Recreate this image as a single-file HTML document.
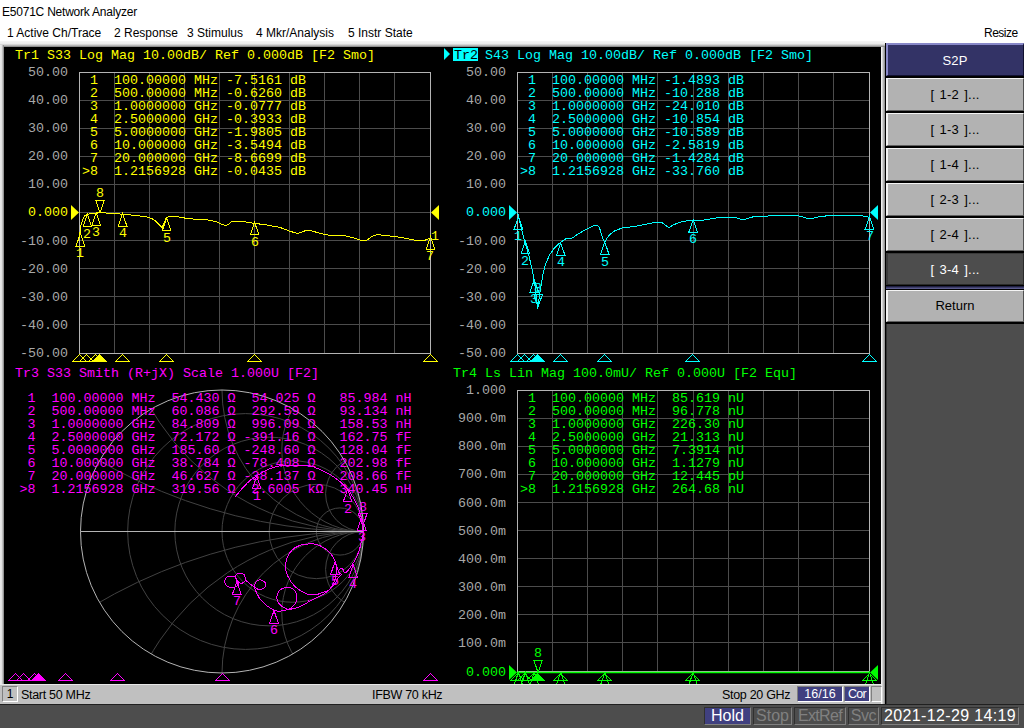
<!DOCTYPE html><html><head><meta charset="utf-8"><style>
*{margin:0;padding:0;box-sizing:border-box}
html,body{width:1024px;height:728px;overflow:hidden;background:#fff}
body{position:relative;font-family:"Liberation Sans",sans-serif;color:#000}
.abs{position:absolute}
.m{font-family:"Liberation Mono",monospace;font-size:13.333px;line-height:13px;height:13px;white-space:pre;position:absolute}
.s{font-family:"Liberation Sans",sans-serif;position:absolute;white-space:pre}
svg{position:absolute;left:0;top:0;overflow:visible;z-index:1}
.m{z-index:2}
.top{z-index:3}
.sb{z-index:4}
.btn{position:absolute;left:886px;width:138px;height:33px;background:#b2b2b2;border-top:1px solid #f4f4f4;border-left:2px solid #f4f4f4;border-right:1px solid #505050;border-bottom:1px solid #606060;font-size:13px;text-align:center;line-height:31px;color:#000;word-spacing:1.5px;letter-spacing:0.2px;padding-right:1px}
.sb{position:absolute;font-family:"Liberation Sans",sans-serif;white-space:pre;text-align:center}
</style></head><body>
<div class="s" style="left:2px;top:4px;font-size:12px;line-height:16px;letter-spacing:-0.22px">E5071C Network Analyzer</div>
<div class="s" style="left:7px;top:25px;font-size:12px;line-height:16px">1 Active Ch/Trace</div>
<div class="s" style="left:114px;top:25px;font-size:12px;line-height:16px">2 Response</div>
<div class="s" style="left:187px;top:25px;font-size:12px;line-height:16px">3 Stimulus</div>
<div class="s" style="left:256px;top:25px;font-size:12px;line-height:16px">4 Mkr/Analysis</div>
<div class="s" style="left:348px;top:25px;font-size:12px;line-height:16px">5 Instr State</div>
<div class="s" style="left:984px;top:25px;font-size:12px;line-height:16px;letter-spacing:-0.5px">Resize</div>
<div class="abs" style="left:0;top:43px;width:886px;height:661px;background:#c0c0c0"></div>
<div class="abs" style="left:0;top:41px;width:885px;height:6px;background:linear-gradient(#f6f6f6 0%,#ececec 45%,#c4c4c4 70%,#7c7c7c 100%)"></div>
<div class="abs" style="left:0;top:45px;width:4px;height:640px;background:linear-gradient(90deg,#ececec 0%,#e0e0e0 45%,#7c7c7c 100%)"></div>
<div class="abs" style="left:4px;top:47px;width:877px;height:637px;background:#000"></div>
<div class="abs" style="left:881px;top:47px;width:4px;height:657px;background:linear-gradient(90deg,#fff,#d0d0d0 40%,#888)"></div>
<div class="abs" style="left:885px;top:43px;width:1px;height:661px;background:#000"></div>
<div class="abs top" style="left:0;top:684px;width:881px;height:20px;background:#c0c0c0;border-top:1px solid #e8e8e8"></div>
<div class="abs" style="left:0;top:704px;width:1024px;height:24px;background:#4d4d4d;border-top:1px solid #202020"></div>
<div class="abs" style="left:886px;top:43px;width:138px;height:661px;background:#4d4d4d"></div>
<div class="abs" style="left:886px;top:43px;width:138px;height:281px;background:#000"></div>
<div class="btn" style="top:43px;line-height:33px;background:#333366;color:#fff;border-color:#8888c8 #101030 #101030 #8888c8;border-top-width:2px;line-height:32px">S2P</div>
<div class="btn" style="top:78px">[ 1-2 ]...</div>
<div class="btn" style="top:113px">[ 1-3 ]...</div>
<div class="btn" style="top:148px">[ 1-4 ]...</div>
<div class="btn" style="top:183px">[ 2-3 ]...</div>
<div class="btn" style="top:218px">[ 2-4 ]...</div>
<div class="btn" style="top:253px;height:32px;background:#4d4d4d;color:#fff;border-color:#3a3a3a #2a2a2a #2a2a2a #3a3a3a">[ 3-4 ]...</div>
<div class="abs" style="left:886px;top:286px;width:138px;height:3px;background:linear-gradient(#101030,#6a6aa0)"></div>
<div class="btn" style="top:290px;height:32px;letter-spacing:0;line-height:30px">Return</div>
<div class="abs" style="left:886px;top:324px;width:138px;height:380px;background:#4d4d4d;border-left:1px solid #303030"></div>
<div class="sb" style="left:2px;top:686px;width:16px;height:16px;border:1px solid;border-color:#808080 #fff #fff #808080;font-size:12px;line-height:14px">1</div>
<div class="sb" style="left:21px;top:687px;font-size:12.5px;line-height:16px;letter-spacing:-0.3px">Start 50 MHz</div>
<div class="sb" style="left:372px;top:687px;font-size:12.5px;line-height:16px;letter-spacing:-0.3px">IFBW 70 kHz</div>
<div class="sb" style="left:722px;top:687px;font-size:12.5px;line-height:16px;letter-spacing:-0.3px">Stop 20 GHz</div>
<div class="sb" style="left:797px;top:686px;width:46px;height:16px;background:#404080;color:#fff;border:1px solid;border-color:#808080 #fff #fff #808080;font-size:12.5px;line-height:14px">16/16</div>
<div class="sb" style="left:844px;top:686px;width:26px;height:16px;background:#404080;color:#fff;border:1px solid;border-color:#808080 #fff #fff #808080;font-size:12.5px;line-height:14px;letter-spacing:-0.7px">Cor</div>
<div class="sb" style="left:871px;top:686px;width:11px;height:16px;border:1px solid;border-color:#808080 #fff #fff #808080"></div>
<div class="sb" style="left:704px;top:707px;width:47px;height:18px;background:#404080;letter-spacing:0px;color:#fff;border:1px solid;border-color:#303030 #808080 #808080 #303030;font-size:16px;line-height:16px">Hold</div>
<div class="sb" style="left:753px;top:707px;width:39px;height:18px;letter-spacing:0px;color:#808080;border:1px solid;border-color:#303030 #808080 #808080 #303030;font-size:16px;line-height:16px">Stop</div>
<div class="sb" style="left:794px;top:707px;width:52px;height:18px;letter-spacing:-0.7px;color:#808080;border:1px solid;border-color:#303030 #808080 #808080 #303030;font-size:16px;line-height:16px">ExtRef</div>
<div class="sb" style="left:848px;top:707px;width:31px;height:18px;letter-spacing:-0.4px;color:#808080;border:1px solid;border-color:#303030 #808080 #808080 #303030;font-size:16px;line-height:16px">Svc</div>
<div class="sb" style="left:881px;top:707px;width:138px;height:18px;letter-spacing:0.35px;color:#fff;border:1px solid;border-color:#303030 #808080 #808080 #303030;font-size:16px;line-height:16px">2021-12-29 14:19</div>
<div class="m" style="left:28px;top:66px;color:#a8a8a8;">50.00</div>
<div class="m" style="left:28px;top:94px;color:#a8a8a8;">40.00</div>
<div class="m" style="left:28px;top:122px;color:#a8a8a8;">30.00</div>
<div class="m" style="left:28px;top:150px;color:#a8a8a8;">20.00</div>
<div class="m" style="left:28px;top:178px;color:#a8a8a8;">10.00</div>
<div class="m" style="left:28px;top:206px;color:#ffff00;">0.000</div>
<div class="m" style="left:20px;top:235px;color:#a8a8a8;">-10.00</div>
<div class="m" style="left:20px;top:263px;color:#a8a8a8;">-20.00</div>
<div class="m" style="left:20px;top:291px;color:#a8a8a8;">-30.00</div>
<div class="m" style="left:20px;top:319px;color:#a8a8a8;">-40.00</div>
<div class="m" style="left:20px;top:347px;color:#a8a8a8;">-50.00</div>
<div class="m" style="left:466px;top:66px;color:#a8a8a8;">50.00</div>
<div class="m" style="left:466px;top:94px;color:#a8a8a8;">40.00</div>
<div class="m" style="left:466px;top:122px;color:#a8a8a8;">30.00</div>
<div class="m" style="left:466px;top:150px;color:#a8a8a8;">20.00</div>
<div class="m" style="left:466px;top:178px;color:#a8a8a8;">10.00</div>
<div class="m" style="left:466px;top:206px;color:#00ffff;">0.000</div>
<div class="m" style="left:458px;top:235px;color:#a8a8a8;">-10.00</div>
<div class="m" style="left:458px;top:263px;color:#a8a8a8;">-20.00</div>
<div class="m" style="left:458px;top:291px;color:#a8a8a8;">-30.00</div>
<div class="m" style="left:458px;top:319px;color:#a8a8a8;">-40.00</div>
<div class="m" style="left:458px;top:347px;color:#a8a8a8;">-50.00</div>
<div class="m" style="left:466px;top:384px;color:#a8a8a8;">1.000</div>
<div class="m" style="left:458px;top:412px;color:#a8a8a8;">900.0m</div>
<div class="m" style="left:458px;top:440px;color:#a8a8a8;">800.0m</div>
<div class="m" style="left:458px;top:468px;color:#a8a8a8;">700.0m</div>
<div class="m" style="left:458px;top:497px;color:#a8a8a8;">600.0m</div>
<div class="m" style="left:458px;top:525px;color:#a8a8a8;">500.0m</div>
<div class="m" style="left:458px;top:553px;color:#a8a8a8;">400.0m</div>
<div class="m" style="left:458px;top:581px;color:#a8a8a8;">300.0m</div>
<div class="m" style="left:458px;top:609px;color:#a8a8a8;">200.0m</div>
<div class="m" style="left:458px;top:637px;color:#a8a8a8;">100.0m</div>
<div class="m" style="left:466px;top:666px;color:#00ff00;">0.000</div>
<div class="m" style="left:15px;top:49px;color:#ffff00;">Tr1 S33 Log Mag 10.00dB/ Ref 0.000dB [F2 Smo]</div>
<div class="abs" style="left:453px;top:48px;width:25px;height:13px;background:#00ffff"></div>
<div class="m" style="left:454px;top:49px;color:#000;">Tr2</div>
<div class="m" style="left:485px;top:49px;color:#00ffff;">S43 Log Mag 10.00dB/ Ref 0.000dB [F2 Smo]</div>
<div class="m" style="left:15px;top:367px;color:#ff00ff;">Tr3 S33 Smith (R+jX) Scale 1.000U [F2]</div>
<div class="m" style="left:453px;top:367px;color:#00ff00;">Tr4 Ls Lin Mag 100.0mU/ Ref 0.000U [F2 Equ]</div>
<div class="m" style="left:82px;top:74px;color:#ffff00;"> 1  100.00000 MHz -7.5161 dB</div>
<div class="m" style="left:82px;top:87px;color:#ffff00;"> 2  500.00000 MHz -0.6260 dB</div>
<div class="m" style="left:82px;top:100px;color:#ffff00;"> 3  1.0000000 GHz -0.0777 dB</div>
<div class="m" style="left:82px;top:113px;color:#ffff00;"> 4  2.5000000 GHz -0.3933 dB</div>
<div class="m" style="left:82px;top:126px;color:#ffff00;"> 5  5.0000000 GHz -1.9805 dB</div>
<div class="m" style="left:82px;top:139px;color:#ffff00;"> 6  10.000000 GHz -3.5494 dB</div>
<div class="m" style="left:82px;top:152px;color:#ffff00;"> 7  20.000000 GHz -8.6699 dB</div>
<div class="m" style="left:82px;top:165px;color:#ffff00;">&gt;8  1.2156928 GHz -0.0435 dB</div>
<div class="m" style="left:520px;top:74px;color:#00ffff;"> 1  100.00000 MHz -1.4893 dB</div>
<div class="m" style="left:520px;top:87px;color:#00ffff;"> 2  500.00000 MHz -10.288 dB</div>
<div class="m" style="left:520px;top:100px;color:#00ffff;"> 3  1.0000000 GHz -24.010 dB</div>
<div class="m" style="left:520px;top:113px;color:#00ffff;"> 4  2.5000000 GHz -10.854 dB</div>
<div class="m" style="left:520px;top:126px;color:#00ffff;"> 5  5.0000000 GHz -10.589 dB</div>
<div class="m" style="left:520px;top:139px;color:#00ffff;"> 6  10.000000 GHz -2.5819 dB</div>
<div class="m" style="left:520px;top:152px;color:#00ffff;"> 7  20.000000 GHz -1.4284 dB</div>
<div class="m" style="left:520px;top:165px;color:#00ffff;">&gt;8  1.2156928 GHz -33.760 dB</div>
<div class="m" style="left:520px;top:392px;color:#00ff00;"> 1  100.00000 MHz  85.619 nU</div>
<div class="m" style="left:520px;top:405px;color:#00ff00;"> 2  500.00000 MHz  96.778 nU</div>
<div class="m" style="left:520px;top:418px;color:#00ff00;"> 3  1.0000000 GHz  226.30 nU</div>
<div class="m" style="left:520px;top:431px;color:#00ff00;"> 4  2.5000000 GHz  21.313 nU</div>
<div class="m" style="left:520px;top:444px;color:#00ff00;"> 5  5.0000000 GHz  7.3914 nU</div>
<div class="m" style="left:520px;top:457px;color:#00ff00;"> 6  10.000000 GHz  1.1279 nU</div>
<div class="m" style="left:520px;top:470px;color:#00ff00;"> 7  20.000000 GHz  12.445 pU</div>
<div class="m" style="left:520px;top:483px;color:#00ff00;">&gt;8  1.2156928 GHz  264.68 nU</div>
<div class="m" style="left:19.5px;top:392px;color:#ff00ff;"> 1  100.00000 MHz  54.430 Ω  54.025 Ω   85.984 nH</div>
<div class="m" style="left:19.5px;top:405px;color:#ff00ff;"> 2  500.00000 MHz  60.086 Ω  292.59 Ω   93.134 nH</div>
<div class="m" style="left:19.5px;top:418px;color:#ff00ff;"> 3  1.0000000 GHz  84.809 Ω  996.09 Ω   158.53 nH</div>
<div class="m" style="left:19.5px;top:431px;color:#ff00ff;"> 4  2.5000000 GHz  72.172 Ω -391.16 Ω   162.75 fF</div>
<div class="m" style="left:19.5px;top:444px;color:#ff00ff;"> 5  5.0000000 GHz  185.60 Ω -248.60 Ω   128.04 fF</div>
<div class="m" style="left:19.5px;top:457px;color:#ff00ff;"> 6  10.000000 GHz  38.784 Ω -78.408 Ω   202.98 fF</div>
<div class="m" style="left:19.5px;top:470px;color:#ff00ff;"> 7  20.000000 GHz  46.627 Ω -38.137 Ω   208.66 fF</div>
<div class="m" style="left:19.5px;top:483px;color:#ff00ff;">&gt;8  1.2156928 GHz  319.56 Ω  2.6005 kΩ  340.45 nH</div>
<div class="m" style="left:76px;top:247px;color:#ffff00;">1</div>
<div class="m" style="left:83px;top:228px;color:#ffff00;">2</div>
<div class="m" style="left:92px;top:226px;color:#ffff00;">3</div>
<div class="m" style="left:119px;top:227px;color:#ffff00;">4</div>
<div class="m" style="left:163px;top:232px;color:#ffff00;">5</div>
<div class="m" style="left:251px;top:236px;color:#ffff00;">6</div>
<div class="m" style="left:426px;top:250px;color:#ffff00;">7</div>
<div class="m" style="left:96px;top:187px;color:#ffff00;">8</div>
<div class="m" style="left:431px;top:230px;color:#ffff00;">1</div>
<div class="m" style="left:514px;top:230px;color:#00ffff;">1</div>
<div class="m" style="left:521px;top:255px;color:#00ffff;">2</div>
<div class="m" style="left:530px;top:293px;color:#00ffff;">3</div>
<div class="m" style="left:557px;top:256px;color:#00ffff;">4</div>
<div class="m" style="left:601px;top:256px;color:#00ffff;">5</div>
<div class="m" style="left:689px;top:233px;color:#00ffff;">6</div>
<div class="m" style="left:866px;top:230px;color:#00ffff;">7</div>
<div class="m" style="left:534px;top:282px;color:#00ffff;">8</div>
<div class="m" style="left:514px;top:686px;color:#00ff00;">1</div>
<div class="m" style="left:521px;top:686px;color:#00ff00;">2</div>
<div class="m" style="left:530px;top:686px;color:#00ff00;">3</div>
<div class="m" style="left:557px;top:686px;color:#00ff00;">4</div>
<div class="m" style="left:601px;top:686px;color:#00ff00;">5</div>
<div class="m" style="left:689px;top:686px;color:#00ff00;">6</div>
<div class="m" style="left:866px;top:686px;color:#00ff00;">7</div>
<div class="m" style="left:534px;top:647px;color:#00ff00;">8</div>
<div class="m" style="left:253px;top:490px;color:#ff00ff;">1</div>
<div class="m" style="left:344px;top:503px;color:#ff00ff;">2</div>
<div class="m" style="left:358px;top:531px;color:#ff00ff;">3</div>
<div class="m" style="left:349px;top:578px;color:#ff00ff;">4</div>
<div class="m" style="left:331px;top:575px;color:#ff00ff;">5</div>
<div class="m" style="left:270px;top:624px;color:#ff00ff;">6</div>
<div class="m" style="left:233px;top:595px;color:#ff00ff;">7</div>
<div class="m" style="left:359px;top:501px;color:#ff00ff;">8</div>
<svg width="1024" height="728" viewBox="0 0 1024 728"><path d="M114.5 72V354M149.5 72V354M184.5 72V354M219.5 72V354M254.5 72V354M289.5 72V354M324.5 72V354M359.5 72V354M394.5 72V354M79 100.5H431M79 128.5H431M79 156.5H431M79 184.5H431M79 212.5H431M79 240.5H431M79 268.5H431M79 296.5H431M79 324.5H431" stroke="#4c4c4c" stroke-width="1" fill="none" shape-rendering="crispEdges"/>
<rect x="79.5" y="72.5" width="351" height="281" stroke="#b4b4b4" stroke-width="1" fill="none" shape-rendering="crispEdges"/>
<path d="M552.5 72V354M587.5 72V354M622.5 72V354M657.5 72V354M693.5 72V354M728.5 72V354M763.5 72V354M798.5 72V354M833.5 72V354M517 100.5H870M517 128.5H870M517 156.5H870M517 184.5H870M517 212.5H870M517 240.5H870M517 268.5H870M517 296.5H870M517 324.5H870" stroke="#4c4c4c" stroke-width="1" fill="none" shape-rendering="crispEdges"/>
<rect x="517.5" y="72.5" width="352" height="281" stroke="#b4b4b4" stroke-width="1" fill="none" shape-rendering="crispEdges"/>
<path d="M552.5 390V672M587.5 390V672M622.5 390V672M657.5 390V672M693.5 390V672M728.5 390V672M763.5 390V672M798.5 390V672M833.5 390V672M517 418.5H870M517 446.5H870M517 474.5H870M517 502.5H870M517 530.5H870M517 558.5H870M517 586.5H870M517 614.5H870M517 642.5H870" stroke="#4c4c4c" stroke-width="1" fill="none" shape-rendering="crispEdges"/>
<rect x="517.5" y="390.5" width="352" height="281" stroke="#b4b4b4" stroke-width="1" fill="none" shape-rendering="crispEdges"/>
<path d="M444 48L450 54L444 60Z" fill="#00ffff"/>
<path d="M79.5 236.6 L80.5 226.9 L82.5 220.0 L84.4 216.1 L87.3 214.2 L95.2 213.2 L100.0 212.8 L110.8 213.2 L122.5 214.2 L138.1 215.7 L145.9 216.7 L151.8 218.5 L155.7 221.0 L159.6 224.9 L162.0 227.5 L164.5 222.0 L166.4 217.7 L169.4 216.3 L173.3 216.1 L185.0 218.1 L196.7 219.5 L208.4 220.0 L216.3 221.6 L222.1 224.5 L226.0 225.5 L228.9 223.9 L231.9 221.4 L243.6 221.6 L254.8 223.4 L266.5 224.9 L280.2 227.5 L289.9 231.2 L296.8 233.3 L300.7 232.7 L305.5 230.6 L310.4 230.6 L323.1 234.1 L330.9 235.5 L344.6 235.7 L354.4 238.2 L360.2 240.2 L367.1 240.2 L372.0 236.3 L377.8 234.3 L381.7 235.1 L395.4 236.6 L407.1 238.6 L416.9 240.5 L424.7 240.4 L429.6 238.2" stroke="#ffff00" stroke-width="1" fill="none" stroke-linejoin="round" shape-rendering="crispEdges"/>
<path d="M517.6 212.5 L519.5 221.3 L522.5 233.0 L525.4 243.7 L529.3 257.4 L532.2 270.0 L534.8 283.8 L536.7 299.4 L537.7 308.2 L539.0 299.4 L541.0 285.7 L543.4 272.0 L545.9 263.2 L549.8 254.5 L554.7 247.6 L560.5 242.3 L566.4 238.4 L572.3 238.0 L578.1 233.9 L585.9 229.6 L593.8 225.5 L597.7 225.2 L599.6 228.1 L602.0 235.9 L604.5 242.7 L607.0 237.9 L610.4 233.9 L615.2 230.6 L623.0 227.7 L634.8 226.5 L644.5 224.6 L656.3 222.2 L662.1 222.6 L666.0 225.7 L668.9 227.5 L672.9 225.2 L679.7 222.2 L687.5 220.7 L700.0 220.3 L705.6 219.9 L713.4 218.3 L723.2 217.3 L734.9 217.3 L740.8 219.3 L744.7 219.3 L754.5 216.4 L768.1 216.0 L787.7 215.8 L795.5 215.4 L801.3 216.4 L807.2 218.3 L813.0 218.3 L820.9 216.4 L832.6 215.4 L846.3 215.2 L861.9 215.8 L869.7 217.3" stroke="#00ffff" stroke-width="1" fill="none" stroke-linejoin="round" shape-rendering="crispEdges"/>
<path d="M517 672.45H870" stroke="#00ff00" stroke-width="1.35"/>
<path d="M71 205.0L79 212.5L71 220.0Z" fill="#ffff00"/>
<path d="M439 205.0L431 212.5L439 220.0Z" fill="#ffff00"/>
<path d="M509 205.0L517 212.5L509 220.0Z" fill="#00ffff"/>
<path d="M878 205.0L870 212.5L878 220.0Z" fill="#00ffff"/>
<path d="M509 665.0L517 672.5L509 680.0Z" fill="#00ff00"/>
<path d="M878 665.0L870 672.5L878 680.0Z" fill="#00ff00"/>
<path d="M80.4 233.5L76.1 246.0H84.7Z" stroke="#ffff00" fill="none" stroke-width="1" shape-rendering="crispEdges"/>
<path d="M87.4 214.3L83.1 226.8H91.7Z" stroke="#ffff00" fill="none" stroke-width="1" shape-rendering="crispEdges"/>
<path d="M96.2 212.7L91.9 225.2H100.5Z" stroke="#ffff00" fill="none" stroke-width="1" shape-rendering="crispEdges"/>
<path d="M122.6 213.6L118.3 226.1H126.9Z" stroke="#ffff00" fill="none" stroke-width="1" shape-rendering="crispEdges"/>
<path d="M166.6 218.0L162.3 230.5H170.9Z" stroke="#ffff00" fill="none" stroke-width="1" shape-rendering="crispEdges"/>
<path d="M254.6 222.4L250.3 234.9H258.9Z" stroke="#ffff00" fill="none" stroke-width="1" shape-rendering="crispEdges"/>
<path d="M430.5 236.8L426.2 249.3H434.8Z" stroke="#ffff00" fill="none" stroke-width="1" shape-rendering="crispEdges"/>
<path d="M100.0 212.6L95.7 200.1H104.3Z" stroke="#ffff00" fill="none" stroke-width="1" shape-rendering="crispEdges"/>
<path d="M79.5 354.5L72.5 361.5H86.5Z" stroke="#ffff00" fill="none" stroke-width="1" shape-rendering="crispEdges"/>
<path d="M86.5 354.5L79.5 361.5H93.5Z" stroke="#ffff00" fill="none" stroke-width="1" shape-rendering="crispEdges"/>
<path d="M95.5 354.5L88.5 361.5H102.5Z" stroke="#ffff00" fill="none" stroke-width="1" shape-rendering="crispEdges"/>
<path d="M122.5 354.5L115.5 361.5H129.5Z" stroke="#ffff00" fill="none" stroke-width="1" shape-rendering="crispEdges"/>
<path d="M166.5 354.5L159.5 361.5H173.5Z" stroke="#ffff00" fill="none" stroke-width="1" shape-rendering="crispEdges"/>
<path d="M254.5 354.5L247.5 361.5H261.5Z" stroke="#ffff00" fill="none" stroke-width="1" shape-rendering="crispEdges"/>
<path d="M430.5 354.5L423.5 361.5H437.5Z" stroke="#ffff00" fill="none" stroke-width="1" shape-rendering="crispEdges"/>
<path d="M99.5 354.5L92.5 361.5H106.5Z" stroke="#ffff00" fill="#ffff00" stroke-width="1" shape-rendering="crispEdges"/>
<path d="M518.4 216.7L514.1 229.2H522.7Z" stroke="#00ffff" fill="none" stroke-width="1" shape-rendering="crispEdges"/>
<path d="M525.4 241.3L521.1 253.8H529.7Z" stroke="#00ffff" fill="none" stroke-width="1" shape-rendering="crispEdges"/>
<path d="M534.3 279.7L530.0 292.2H538.6Z" stroke="#00ffff" fill="none" stroke-width="1" shape-rendering="crispEdges"/>
<path d="M560.7 242.9L556.4 255.4H565.0Z" stroke="#00ffff" fill="none" stroke-width="1" shape-rendering="crispEdges"/>
<path d="M604.8 242.1L600.5 254.6H609.1Z" stroke="#00ffff" fill="none" stroke-width="1" shape-rendering="crispEdges"/>
<path d="M693.1 219.7L688.8 232.2H697.4Z" stroke="#00ffff" fill="none" stroke-width="1" shape-rendering="crispEdges"/>
<path d="M869.5 216.5L865.2 229.0H873.8Z" stroke="#00ffff" fill="none" stroke-width="1" shape-rendering="crispEdges"/>
<path d="M538.1 307.0L533.8 294.5H542.4Z" stroke="#00ffff" fill="none" stroke-width="1" shape-rendering="crispEdges"/>
<path d="M517.5 354.5L510.5 361.5H524.5Z" stroke="#00ffff" fill="none" stroke-width="1" shape-rendering="crispEdges"/>
<path d="M524.5 354.5L517.5 361.5H531.5Z" stroke="#00ffff" fill="none" stroke-width="1" shape-rendering="crispEdges"/>
<path d="M533.5 354.5L526.5 361.5H540.5Z" stroke="#00ffff" fill="none" stroke-width="1" shape-rendering="crispEdges"/>
<path d="M560.5 354.5L553.5 361.5H567.5Z" stroke="#00ffff" fill="none" stroke-width="1" shape-rendering="crispEdges"/>
<path d="M604.5 354.5L597.5 361.5H611.5Z" stroke="#00ffff" fill="none" stroke-width="1" shape-rendering="crispEdges"/>
<path d="M692.5 354.5L685.5 361.5H699.5Z" stroke="#00ffff" fill="none" stroke-width="1" shape-rendering="crispEdges"/>
<path d="M869.5 354.5L862.5 361.5H876.5Z" stroke="#00ffff" fill="none" stroke-width="1" shape-rendering="crispEdges"/>
<path d="M537.5 354.5L530.5 361.5H544.5Z" stroke="#00ffff" fill="#00ffff" stroke-width="1" shape-rendering="crispEdges"/>
<path d="M518.4 672.5L514.1 685.0H522.7Z" stroke="#00ff00" fill="none" stroke-width="1" shape-rendering="crispEdges"/>
<path d="M525.4 672.5L521.1 685.0H529.7Z" stroke="#00ff00" fill="none" stroke-width="1" shape-rendering="crispEdges"/>
<path d="M534.3 672.5L530.0 685.0H538.6Z" stroke="#00ff00" fill="none" stroke-width="1" shape-rendering="crispEdges"/>
<path d="M560.7 672.5L556.4 685.0H565.0Z" stroke="#00ff00" fill="none" stroke-width="1" shape-rendering="crispEdges"/>
<path d="M604.8 672.5L600.5 685.0H609.1Z" stroke="#00ff00" fill="none" stroke-width="1" shape-rendering="crispEdges"/>
<path d="M693.1 672.5L688.8 685.0H697.4Z" stroke="#00ff00" fill="none" stroke-width="1" shape-rendering="crispEdges"/>
<path d="M869.5 672.5L865.2 685.0H873.8Z" stroke="#00ff00" fill="none" stroke-width="1" shape-rendering="crispEdges"/>
<path d="M538.1 672.6L533.8 660.1H542.4Z" stroke="#00ff00" fill="none" stroke-width="1" shape-rendering="crispEdges"/>
<path d="M517.5 673.5L510.5 680.5H524.5Z" stroke="#00ff00" fill="none" stroke-width="1" shape-rendering="crispEdges"/>
<path d="M524.5 673.5L517.5 680.5H531.5Z" stroke="#00ff00" fill="none" stroke-width="1" shape-rendering="crispEdges"/>
<path d="M533.5 673.5L526.5 680.5H540.5Z" stroke="#00ff00" fill="none" stroke-width="1" shape-rendering="crispEdges"/>
<path d="M560.5 673.5L553.5 680.5H567.5Z" stroke="#00ff00" fill="none" stroke-width="1" shape-rendering="crispEdges"/>
<path d="M604.5 673.5L597.5 680.5H611.5Z" stroke="#00ff00" fill="none" stroke-width="1" shape-rendering="crispEdges"/>
<path d="M692.5 673.5L685.5 680.5H699.5Z" stroke="#00ff00" fill="none" stroke-width="1" shape-rendering="crispEdges"/>
<path d="M869.5 673.5L862.5 680.5H876.5Z" stroke="#00ff00" fill="none" stroke-width="1" shape-rendering="crispEdges"/>
<path d="M537.5 673.5L530.5 680.5H544.5Z" stroke="#00ff00" fill="#00ff00" stroke-width="1" shape-rendering="crispEdges"/>
<clipPath id="sc"><circle cx="222.0" cy="531.5" r="141.5"/></clipPath>
<g clip-path="url(#sc)" stroke="#424242" stroke-width="1" fill="none"><circle cx="245.58" cy="531.5" r="117.92"/><circle cx="269.17" cy="531.5" r="94.33"/><circle cx="292.75" cy="531.5" r="70.75"/><circle cx="316.33" cy="531.5" r="47.17"/><circle cx="339.92" cy="531.5" r="23.58"/><circle cx="363.5" cy="3.41" r="528.09"/><circle cx="363.5" cy="1059.59" r="528.09"/><circle cx="363.5" cy="286.41" r="245.09"/><circle cx="363.5" cy="776.59" r="245.09"/><circle cx="363.5" cy="390.00" r="141.50"/><circle cx="363.5" cy="673.00" r="141.50"/><circle cx="363.5" cy="449.80" r="81.70"/><circle cx="363.5" cy="613.20" r="81.70"/><circle cx="363.5" cy="493.59" r="37.91"/><circle cx="363.5" cy="569.41" r="37.91"/></g>
<circle cx="222.0" cy="531.5" r="141.5" stroke="#b4b4b4" stroke-width="1" fill="none"/>
<path d="M80.5 531.5H363.5" stroke="#b4b4b4" stroke-width="1"/>
<path d="M235.3 496.7 L236.3 495.5 L237.7 493.8 L239.3 491.8 L241.0 489.8 L242.6 488.0 L244.1 486.4 L245.6 484.8 L247.0 483.3 L248.5 481.9 L249.9 480.6 L251.2 479.5 L252.5 478.7 L253.8 477.9 L255.1 477.1 L256.5 476.2 L258.0 475.2 L259.6 474.1 L261.2 473.1 L262.8 472.0 L264.5 471.1 L266.2 470.3 L267.9 469.5 L269.6 468.8 L271.4 468.1 L273.3 467.5 L275.2 466.9 L277.1 466.4 L279.1 466.0 L281.2 465.6 L283.6 465.3 L286.3 465.1 L289.3 465.1 L292.4 465.1 L295.4 465.2 L298.2 465.3 L300.8 465.3 L303.2 465.4 L305.5 465.5 L307.8 465.7 L310.0 466.0 L312.2 466.5 L314.3 467.2 L316.3 468.0 L318.3 468.8 L320.2 469.6 L322.0 470.4 L323.8 471.2 L325.5 472.1 L327.3 473.0 L329.0 474.0 L330.8 475.1 L332.6 476.2 L334.4 477.4 L336.1 478.7 L337.8 479.9 L339.4 481.2 L341.0 482.6 L342.5 483.9 L343.8 485.3 L345.1 486.5 L346.2 487.6 L347.1 488.5 L347.9 489.5 L348.7 490.5 L349.5 491.6 L350.4 492.9 L351.3 494.3 L352.1 495.8 L353.0 497.3 L353.9 498.9 L354.8 500.5 L355.7 502.2 L356.6 504.0 L357.5 505.8 L358.3 507.7 L359.0 509.7 L359.6 511.7 L360.2 513.8 L360.7 515.9 L361.2 518.0 L361.6 520.2 L361.9 522.4 L362.2 524.6 L362.5 526.6 L362.7 528.2 L362.9 529.3 L363.1 530.0 L363.2 530.4 L363.3 530.9 L363.3 531.5 L363.3 532.3 L363.3 533.2 L363.2 534.1 L363.1 535.0 L362.9 536.0 L362.7 536.9 L362.5 537.8 L362.2 538.8 L361.9 539.8 L361.6 541.0 L361.3 542.3 L360.9 543.8 L360.6 545.3 L360.2 546.9 L359.7 548.5 L359.2 550.2 L358.6 552.0 L357.9 553.8 L357.3 555.6 L356.6 557.2 L355.9 558.6 L355.2 559.9 L354.5 561.0 L353.7 562.2 L352.9 563.4 L352.1 564.7 L351.2 566.0 L350.3 567.4 L349.4 568.6 L348.6 569.6 L347.9 570.5 L347.2 571.2 L346.6 571.8 L346.0 572.3 L345.5 572.6 L345.0 572.7 L344.7 572.5 L344.3 572.3 L344.0 571.9 L343.8 571.6 L343.7 571.2 L343.6 570.8 L343.6 570.4 L343.6 569.9 L343.4 569.6 L343.1 569.3 L342.6 569.0 L342.2 568.8 L341.7 568.7 L341.2 568.7 L340.7 568.8 L340.2 569.1 L339.7 569.4 L339.3 569.8 L339.0 570.2 L338.9 570.7 L338.9 571.2 L338.9 571.8 L339.1 572.3 L339.3 572.8 L339.7 573.1 L340.2 573.4 L340.8 573.6 L341.2 573.9 L341.3 574.3 L341.0 574.9 L340.4 575.6 L339.7 576.4 L338.9 577.2 L338.1 578.2 L337.4 579.3 L336.7 580.6 L336.0 581.9 L335.2 583.2 L334.4 584.4 L333.5 585.5 L332.5 586.7 L331.5 587.8 L330.5 588.7 L329.4 589.6 L328.3 590.3 L327.0 590.9 L325.8 591.3 L324.5 591.8 L323.3 592.2 L322.1 592.7 L320.9 593.2 L319.8 593.6 L318.5 594.0 L317.1 594.3 L315.5 594.5 L313.9 594.8 L312.1 594.9 L310.3 594.8 L308.4 594.5 L306.5 593.8 L304.4 592.9 L302.3 591.8 L300.3 590.6 L298.5 589.3 L296.8 588.0 L295.2 586.6 L293.8 585.1 L292.4 583.6 L291.1 581.9 L289.9 580.0 L288.8 577.9 L287.7 575.8 L286.9 573.8 L286.2 572.0 L285.8 570.6 L285.5 569.4 L285.5 568.3 L285.5 567.1 L285.6 565.8 L285.8 564.2 L286.0 562.5 L286.3 560.7 L286.8 558.9 L287.4 557.2 L288.2 555.6 L289.1 554.0 L290.1 552.5 L291.2 551.1 L292.4 549.8 L293.7 548.7 L295.1 547.7 L296.6 546.9 L298.2 546.1 L299.8 545.5 L301.4 545.0 L303.1 544.6 L304.9 544.3 L306.7 544.1 L308.4 544.0 L310.1 543.9 L311.9 543.9 L313.6 544.0 L315.4 544.2 L317.1 544.6 L318.9 545.2 L320.7 546.1 L322.4 547.1 L324.1 548.1 L325.7 549.2 L327.1 550.3 L328.5 551.5 L329.7 552.7 L330.9 554.0 L331.9 555.3 L332.8 556.6 L333.6 557.9 L334.3 559.3 L334.9 560.7 L335.4 562.1 L335.8 563.6 L336.1 565.1 L336.3 566.6 L336.4 568.1 L336.5 569.6 L336.5 571.1 L336.4 572.6 L336.2 574.1 L335.9 575.6 L335.6 577.0 L335.2 578.4 L334.8 579.8 L334.3 581.2 L333.8 582.5 L333.2 583.8 L332.6 585.0 L331.9 586.2 L331.2 587.4 L330.3 588.5 L329.4 589.6 L328.3 590.6 L327.1 591.6 L325.9 592.6 L324.6 593.5 L323.3 594.3 L322.1 595.0 L320.9 595.6 L319.7 596.2 L318.4 596.8 L317.1 597.4 L315.6 598.2 L313.9 599.0 L312.3 599.9 L310.8 600.6 L309.7 601.1 L309.0 601.3 L308.6 601.2 L308.4 601.1 L308.3 600.9 L308.2 600.9 L308.1 601.1 L308.1 601.3 L308.1 601.6 L308.0 601.9 L307.8 602.2 L307.4 602.5 L306.9 602.9 L306.3 603.3 L305.6 603.7 L304.7 604.2 L303.6 604.8 L302.4 605.5 L301.0 606.2 L299.7 606.8 L298.5 607.3 L297.5 607.7 L296.7 607.9 L295.9 608.1 L295.1 608.2 L294.2 608.4 L293.2 608.6 L292.2 608.8 L291.1 609.1 L290.0 609.2 L289.0 609.2 L288.0 609.1 L287.1 609.0 L286.2 608.7 L285.3 608.3 L284.3 607.8 L283.2 607.1 L281.9 606.3 L280.7 605.3 L279.6 604.3 L278.7 603.2 L278.0 602.1 L277.5 600.8 L277.1 599.6 L276.9 598.3 L276.9 597.0 L277.0 595.7 L277.3 594.4 L277.8 593.1 L278.4 591.9 L279.3 590.8 L280.5 589.8 L281.9 588.8 L283.6 588.0 L285.2 587.4 L286.8 587.1 L288.4 587.2 L290.0 587.7 L291.6 588.4 L293.0 589.2 L294.2 590.2 L295.1 591.3 L295.8 592.7 L296.3 594.2 L296.7 595.6 L296.9 597.0 L296.9 598.3 L296.8 599.5 L296.4 600.7 L296.0 601.9 L295.5 603.0 L294.9 604.0 L294.1 605.0 L293.3 605.9 L292.4 606.8 L291.5 607.5 L290.6 608.1 L289.8 608.6 L288.9 608.9 L288.0 609.3 L287.0 609.6 L286.0 609.9 L284.9 610.2 L283.8 610.4 L282.8 610.6 L281.8 610.8 L281.0 611.0 L280.2 611.1 L279.6 611.2 L278.9 611.2 L278.1 611.2 L277.3 611.1 L276.4 610.9 L275.6 610.7 L274.7 610.3 L273.8 610.0 L272.9 609.6 L272.1 609.2 L271.2 608.6 L270.3 608.1 L269.4 607.5 L268.5 606.9 L267.5 606.2 L266.5 605.5 L265.5 604.7 L264.5 603.8 L263.5 602.8 L262.5 601.7 L261.4 600.5 L260.5 599.4 L259.6 598.2 L258.8 597.1 L258.2 595.9 L257.6 594.8 L257.0 593.7 L256.5 592.6 L256.0 591.5 L255.6 590.5 L255.2 589.5 L254.8 588.6 L254.6 587.7 L254.4 587.0 L254.3 586.4 L254.3 585.8 L254.4 585.2 L254.6 584.6 L254.9 583.9 L255.4 583.0 L255.9 582.2 L256.5 581.5 L257.1 580.9 L257.8 580.5 L258.5 580.2 L259.2 580.0 L260.0 579.9 L260.8 580.0 L261.7 580.3 L262.7 580.7 L263.6 581.2 L264.5 581.8 L265.1 582.4 L265.5 583.0 L265.8 583.7 L265.9 584.4 L265.9 585.1 L265.7 585.8 L265.3 586.5 L264.8 587.2 L264.1 587.9 L263.4 588.5 L262.6 588.9 L261.8 589.2 L260.9 589.4 L260.0 589.4 L259.1 589.4 L258.3 589.3 L257.6 589.1 L256.9 588.8 L256.3 588.4 L255.7 588.0 L255.2 587.7 L254.8 587.5 L254.4 587.3 L254.2 587.1 L253.8 586.8 L253.4 586.5 L252.9 586.1 L252.3 585.6 L251.6 585.1 L250.9 584.5 L250.3 584.0 L249.7 583.5 L249.0 583.0 L248.4 582.4 L247.7 582.0 L247.2 581.5 L246.7 581.1 L246.3 580.6 L245.9 580.3 L245.5 579.9 L245.3 579.7" stroke="#ff00ff" stroke-width="1" fill="none" stroke-linejoin="round" shape-rendering="crispEdges"/>
<path d="M245.3 579.7 L245.3 578.8 L245.1 577.7 L244.9 576.6 L244.5 575.5 L244.1 574.7 L243.5 574.1 L242.8 573.7 L242.0 573.4 L241.2 573.2 L240.4 573.1 L239.6 573.1 L238.8 573.2 L238.0 573.4 L237.3 573.7 L236.7 574.1 L236.3 574.6 L235.9 575.2 L235.6 575.8 L235.5 576.5 L235.5 577.2 L235.6 577.9 L235.9 578.7 L236.3 579.5 L236.8 580.2 L237.3 580.9 L237.9 581.5 L238.7 582.2 L239.5 582.7 L240.3 583.2 L241.0 583.4 L241.7 583.4 L242.4 583.1 L243.0 582.7 L243.6 582.3 L244.1 581.9 L244.5 581.5 L244.8 581.2 L245.1 580.8 L245.2 580.3 L245.3 579.7" stroke="#ff00ff" stroke-width="1" fill="none" stroke-linejoin="round" shape-rendering="crispEdges"/>
<path d="M236.1 577.8 L235.5 577.3 L234.9 576.9 L234.1 576.5 L233.3 576.2 L232.4 576.0 L231.4 576.0 L230.4 576.0 L229.3 576.2 L228.3 576.5 L227.4 576.9 L226.6 577.5 L226.0 578.3 L225.4 579.1 L224.9 580.0 L224.7 580.9 L224.7 581.8 L224.8 582.7 L225.2 583.6 L225.6 584.5 L226.2 585.2 L227.0 585.9 L227.9 586.5 L229.0 587.1 L230.1 587.5 L231.1 587.7 L232.1 587.7 L233.2 587.6 L234.3 587.3 L235.3 586.9 L236.1 586.5 L236.8 586.0 L237.4 585.4 L237.9 584.7 L238.3 584.0 L238.5 583.4 L238.5 582.9 L238.3 582.4 L238.0 581.9 L237.6 581.4 L237.3 580.9 L237.1 580.3 L236.9 579.6 L236.8 579.0 L236.5 578.3 L236.1 577.8" stroke="#ff00ff" stroke-width="1" fill="none" stroke-linejoin="round" shape-rendering="crispEdges"/>
<path d="M256.6 476.2L252.3 488.7H260.9Z" stroke="#ff00ff" fill="none" stroke-width="1" shape-rendering="crispEdges"/>
<path d="M347.6 489.1L343.3 501.6H351.9Z" stroke="#ff00ff" fill="none" stroke-width="1" shape-rendering="crispEdges"/>
<path d="M361.6 517.5L357.3 530.0H365.9Z" stroke="#ff00ff" fill="none" stroke-width="1" shape-rendering="crispEdges"/>
<path d="M353.2 564.5L348.9 577.0H357.5Z" stroke="#ff00ff" fill="none" stroke-width="1" shape-rendering="crispEdges"/>
<path d="M335.1 561.5L330.8 574.0H339.4Z" stroke="#ff00ff" fill="none" stroke-width="1" shape-rendering="crispEdges"/>
<path d="M274.0 610.6L269.7 623.1H278.3Z" stroke="#ff00ff" fill="none" stroke-width="1" shape-rendering="crispEdges"/>
<path d="M236.8 581.5L232.5 594.0H241.1Z" stroke="#ff00ff" fill="none" stroke-width="1" shape-rendering="crispEdges"/>
<path d="M362.7 526.2L358.4 513.7H367.0Z" stroke="#ff00ff" fill="none" stroke-width="1" shape-rendering="crispEdges"/>
<path d="M15.5 673.5L8.5 680.5H22.5Z" stroke="#ff00ff" fill="none" stroke-width="1" shape-rendering="crispEdges"/>
<path d="M23.5 673.5L16.5 680.5H30.5Z" stroke="#ff00ff" fill="none" stroke-width="1" shape-rendering="crispEdges"/>
<path d="M34.5 673.5L27.5 680.5H41.5Z" stroke="#ff00ff" fill="none" stroke-width="1" shape-rendering="crispEdges"/>
<path d="M65.5 673.5L58.5 680.5H72.5Z" stroke="#ff00ff" fill="none" stroke-width="1" shape-rendering="crispEdges"/>
<path d="M117.5 673.5L110.5 680.5H124.5Z" stroke="#ff00ff" fill="none" stroke-width="1" shape-rendering="crispEdges"/>
<path d="M222.5 673.5L215.5 680.5H229.5Z" stroke="#ff00ff" fill="none" stroke-width="1" shape-rendering="crispEdges"/>
<path d="M430.5 673.5L423.5 680.5H437.5Z" stroke="#ff00ff" fill="none" stroke-width="1" shape-rendering="crispEdges"/>
<path d="M38.5 673.5L31.5 680.5H45.5Z" stroke="#ff00ff" fill="#ff00ff" stroke-width="1" shape-rendering="crispEdges"/></svg>
</body></html>
